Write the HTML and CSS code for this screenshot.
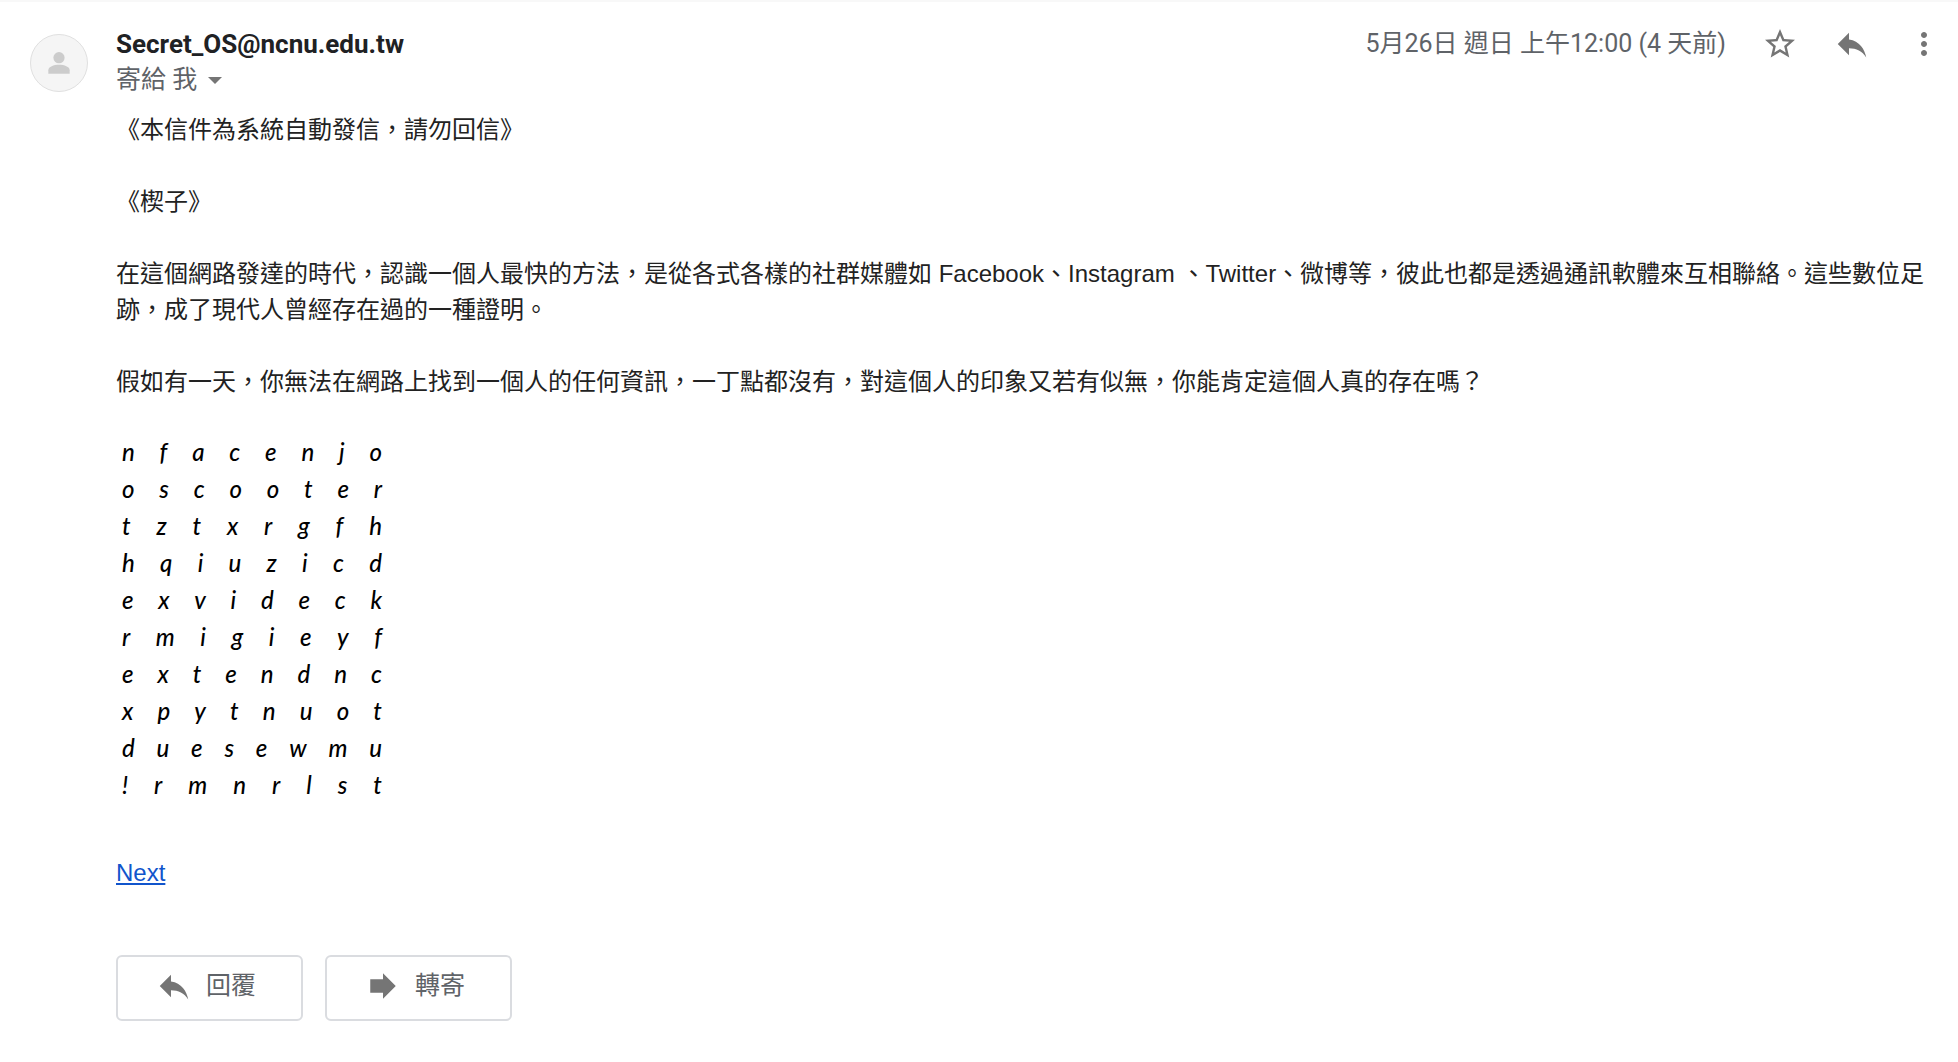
FILE: index.html
```html
<!DOCTYPE html>
<html lang="zh-Hant">

<head>
    <meta charset="UTF-8">
    <meta name="viewport" content="width=device-width, initial-scale=1.0">
    <title>Secret_OS@ncnu.edu.tw</title>
    <link rel="stylesheet" href="styles.css">
</head>

<body>

    <main class="mail">
        <div class="avatar">
            <svg viewBox="0 0 24 24" width="32" height="32" aria-hidden="true">
                <circle cx="12" cy="8" r="4.2" />
                <path d="M4 20v-2.6c0-2.7 4-4.1 8-4.1s8 1.4 8 4.1V20z" />
            </svg>
        </div>

        <div class="content">
            <header class="header">
                <div class="sender">
                    <h1>Secret_OS@ncnu.edu.tw</h1>
                    <button class="recipient" type="button">寄給 我 <span class="caret"></span></button>
                </div>
                <div class="tools">
                    <span class="date">5月26日 週日 上午12:00 (4 天前)</span>
                    <button class="icon-button" type="button" aria-label="加星號">
                        <svg viewBox="0 0 24 24" width="36" height="36">
                            <path d="M22 9.24l-7.19-.62L12 2 9.19 8.63 2 9.24l5.46 4.73L5.82 21 12 17.27 18.18 21l-1.63-7.03L22 9.24zM12 15.4l-3.76 2.27 1-4.28-3.32-2.88 4.38-.38L12 6.1l1.71 4.04 4.38.38-3.32 2.88 1 4.28L12 15.4z" />
                        </svg>
                    </button>
                    <button class="icon-button" type="button" aria-label="回覆">
                        <svg viewBox="0 0 24 24" width="36" height="36">
                            <path d="M10 9V4.500l-7.500 7.500 7.500 7.500v-4.600c5 0 8.800 1.800 11.500 6.100-1-5.500-4.500-11-11.500-12z" />
                        </svg>
                    </button>
                    <button class="icon-button" type="button" aria-label="更多">
                        <svg viewBox="0 0 24 24" width="36" height="36">
                            <path d="M12 8c1.1 0 2-.9 2-2s-.9-2-2-2-2 .9-2 2 .9 2 2 2zm0 2c-1.1 0-2 .9-2 2s.9 2 2 2 2-.9 2-2-.9-2-2-2zm0 6c-1.1 0-2 .9-2 2s.9 2 2 2 2-.9 2-2-.9-2-2-2z" />
                        </svg>
                    </button>
                </div>
            </header>

            <div class="message">
                <p>《本信件為系統自動發信，請勿回信》</p>
                <p>《楔子》</p>
                <p>在這個網路發達的時代，認識一個人最快的方法，是從各式各樣的社群媒體如 Facebook、Instagram 、Twitter、微博等，彼此也都是透過通訊軟體來互相聯絡。這些數位足跡，成了現代人曾經存在過的一種證明。</p>
                <p>假如有一天，你無法在網路上找到一個人的任何資訊，一丁點都沒有，對這個人的印象又若有似無，你能肯定這個人真的存在嗎？</p>

                <div class="puzzle">
                    <div class="row"><span>n</span><span>f</span><span>a</span><span>c</span><span>e</span><span>n</span><span>j</span><span>o</span></div>
                    <div class="row"><span>o</span><span>s</span><span>c</span><span>o</span><span>o</span><span>t</span><span>e</span><span>r</span></div>
                    <div class="row"><span>t</span><span>z</span><span>t</span><span>x</span><span>r</span><span>g</span><span>f</span><span>h</span></div>
                    <div class="row"><span>h</span><span>q</span><span>i</span><span>u</span><span>z</span><span>i</span><span>c</span><span>d</span></div>
                    <div class="row"><span>e</span><span>x</span><span>v</span><span>i</span><span>d</span><span>e</span><span>c</span><span>k</span></div>
                    <div class="row"><span>r</span><span>m</span><span>i</span><span>g</span><span>i</span><span>e</span><span>y</span><span>f</span></div>
                    <div class="row"><span>e</span><span>x</span><span>t</span><span>e</span><span>n</span><span>d</span><span>n</span><span>c</span></div>
                    <div class="row"><span>x</span><span>p</span><span>y</span><span>t</span><span>n</span><span>u</span><span>o</span><span>t</span></div>
                    <div class="row"><span>d</span><span>u</span><span>e</span><span>s</span><span>e</span><span>w</span><span>m</span><span>u</span></div>
                    <div class="row"><span>!</span><span>r</span><span>m</span><span>n</span><span>r</span><span>l</span><span>s</span><span>t</span></div>
                </div>

                <a class="next" href="#">Next</a>
            </div>

            <div class="actions">
                <button class="action" type="button">
                    <svg viewBox="0 0 24 24" width="36" height="36" aria-hidden="true">
                        <path d="M10 9V4.500l-7.500 7.500 7.500 7.500v-4.600c5 0 8.800 1.800 11.500 6.100-1-5.500-4.500-11-11.500-12z" />
                    </svg>
                    回覆
                </button>
                <button class="action" type="button">
                    <svg viewBox="0 0 24 24" width="36" height="36" aria-hidden="true">
                        <path d="M12 8V3.5l8.5 8.5-8.5 8.5V16.500H3.500V7.500H12z" />
                    </svg>
                    轉寄
                </button>
            </div>
        </div>
    </main>

</body>

</html>
```

FILE: styles.css
```css
* {
    box-sizing: border-box;
}

body {
    margin: 0;
    background-color: #fff;
    color: #222;
    font-family: "Liberation Sans", "Noto Sans CJK TC", sans-serif;
    font-size: 24px;
    line-height: 36px;
    text-spacing-trim: space-all;
}

button {
    border: 0;
    padding: 0;
    background: none;
    color: #5f6368;
    font-family: Roboto, "Noto Sans CJK TC", sans-serif;
    line-height: 36px;
    cursor: pointer;
}

svg {
    display: block;
    fill: #757575;
}

.mail {
    display: flex;
    gap: 28px;
    padding: 24px 16px 40px 30px;
    border-top: 2px solid #f8f8f8;
}

.avatar {
    display: flex;
    flex: none;
    align-items: center;
    justify-content: center;
    width: 58px;
    height: 58px;
    margin-top: 8px;
    border: 1px solid #e0e0e0;
    border-radius: 50%;
    background-color: #f5f5f5;
}

.avatar svg {
    fill: #ccc;
}

.content {
    flex: 1;
    min-width: 0;
}

.header {
    display: flex;
    justify-content: space-between;
    align-items: flex-start;
}

.sender h1 {
    margin: 0;
    color: #202124;
    font-family: Roboto, sans-serif;
    font-size: 26px;
    font-weight: 700;
    line-height: 36px;
}

.recipient {
    display: flex;
    align-items: center;
    gap: 11px;
    font-size: 25px;
}

.caret {
    border: 7px solid transparent;
    border-top-color: #757575;
    border-bottom: 0;
}

.tools {
    display: flex;
    align-items: center;
    gap: 36px;
}

.date {
    color: #5f6368;
    font-family: Roboto, "Noto Sans CJK TC", sans-serif;
    font-size: 25px;
}

.message {
    padding-top: 14px;
}

.message p {
    margin: 0;
}

.message p + p {
    margin-top: 36px;
}

.puzzle {
    width: 276px;
    margin-top: 33px;
    padding: 0 10px 0 6px;
    color: #000;
    font-family: "Segoe Script", Lato, sans-serif;
    font-size: 24px;
    font-style: italic;
    font-weight: 500;
    line-height: 37px;
}

.row {
    display: flex;
    justify-content: space-between;
}

.next {
    display: inline-block;
    margin-top: 52px;
    color: #15c;
}

.actions {
    display: flex;
    gap: 22px;
    margin-top: 64px;
}

.action {
    display: flex;
    align-items: center;
    gap: 14px;
    height: 66px;
    padding: 0 45px 4px 38px;
    border: 2px solid #dadce0;
    border-radius: 6px;
    font-size: 25px;
}
```
